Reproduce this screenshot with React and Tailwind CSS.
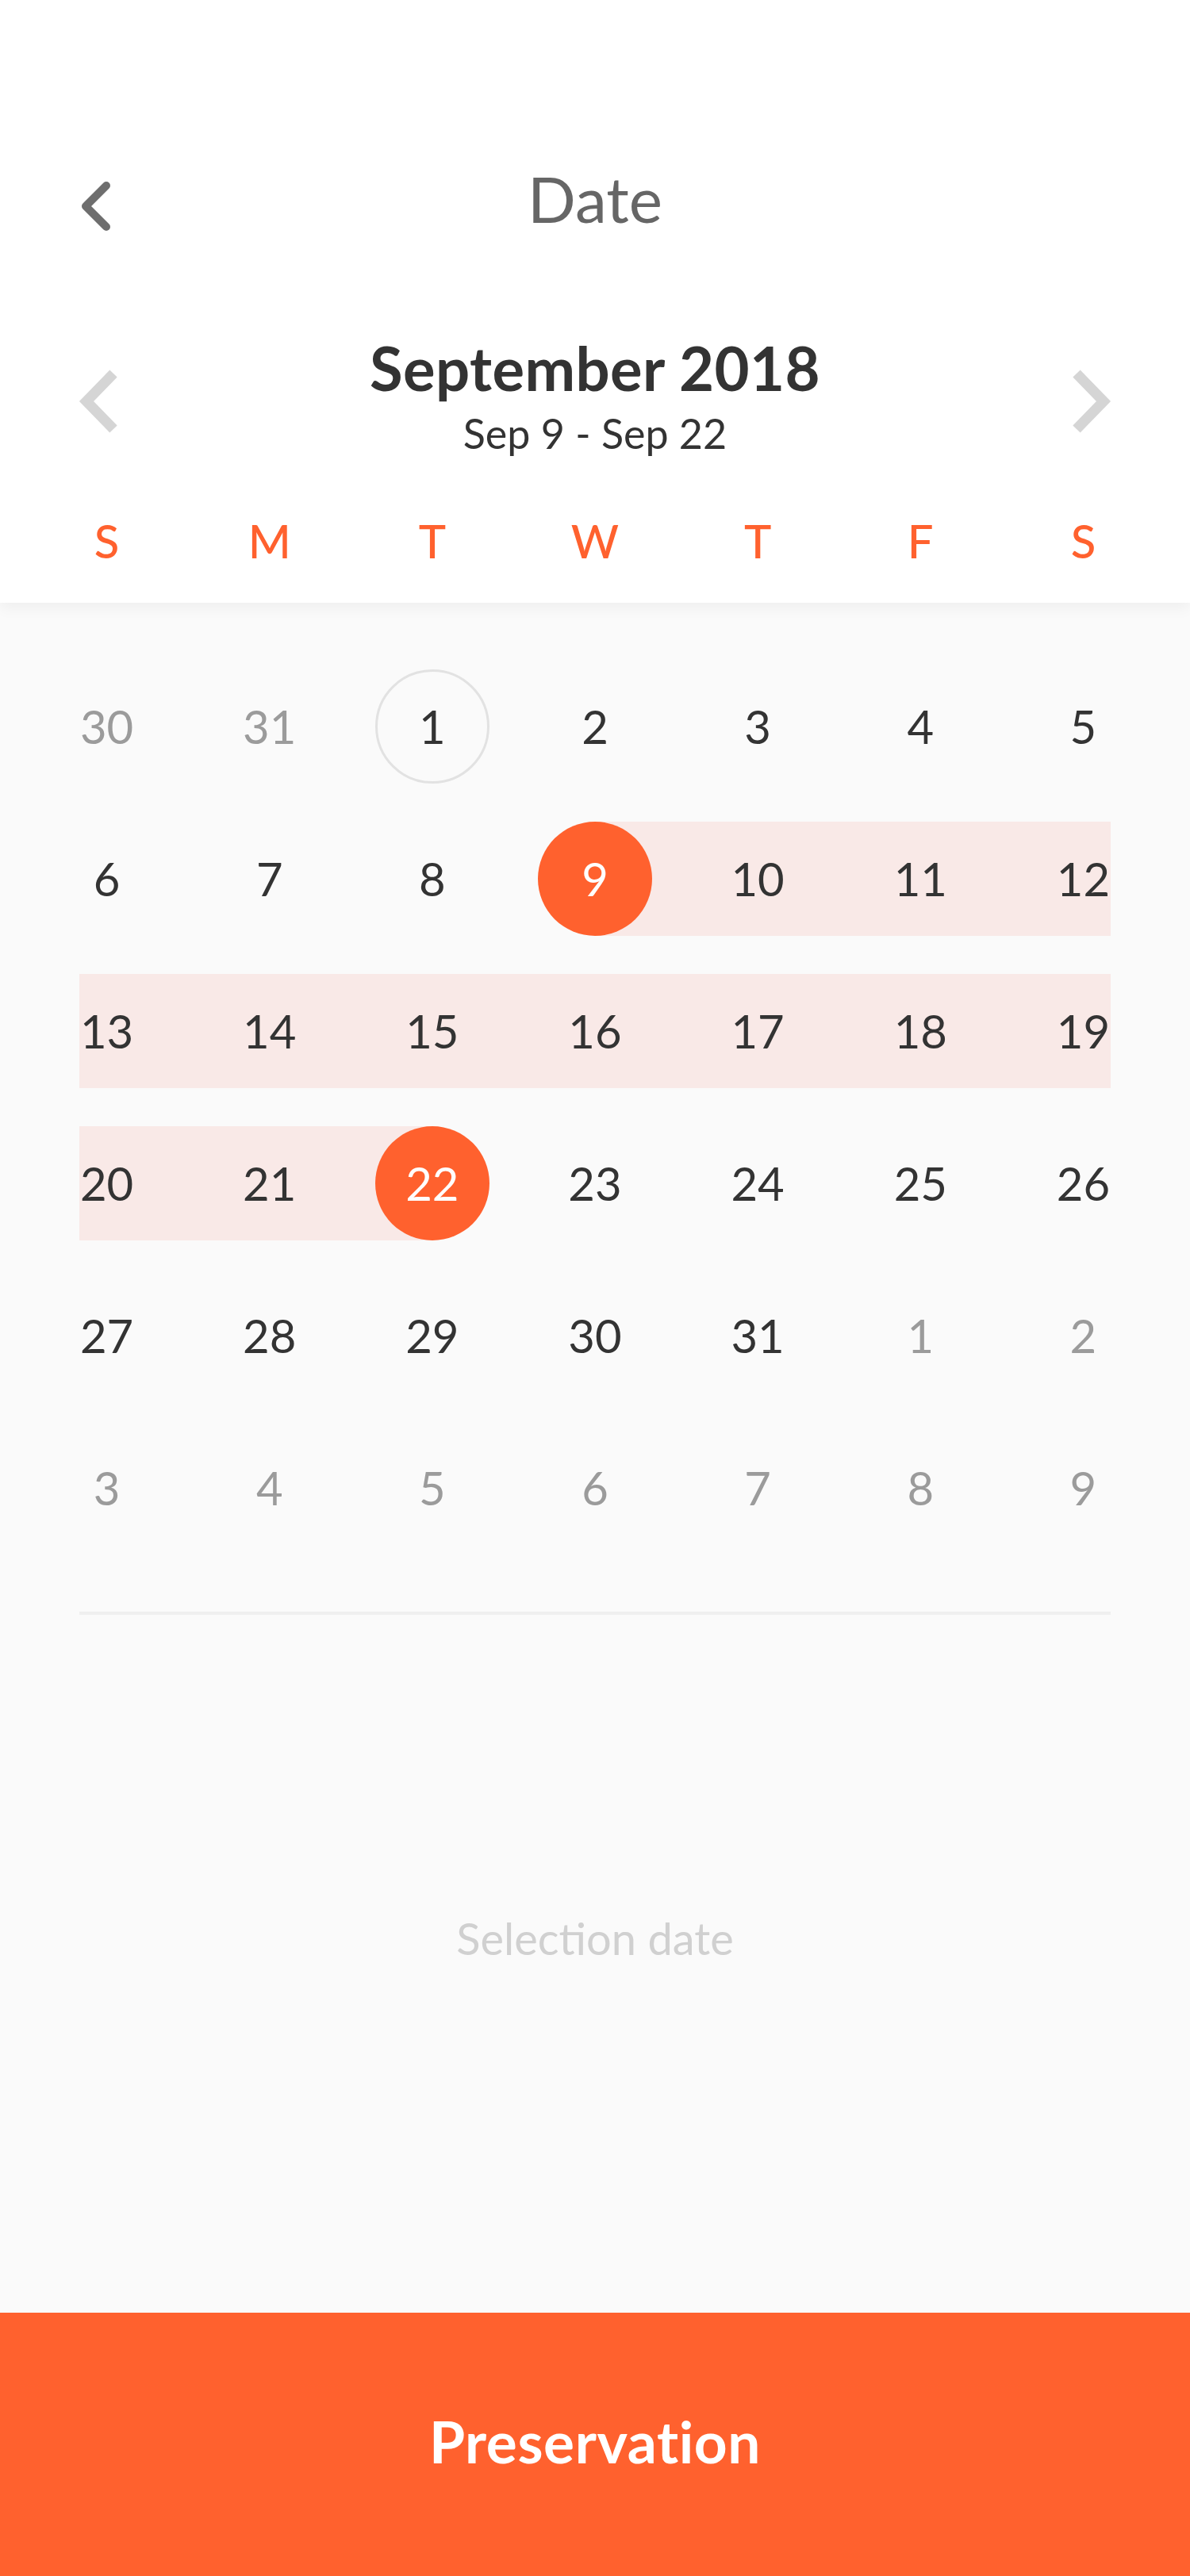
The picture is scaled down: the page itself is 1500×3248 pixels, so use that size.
import React from "react";

const weekdays = ["S", "M", "T", "W", "T", "F", "S"];

// each cell: [label, muted, band: 'none'|'full'|'left'|'right', mark: 'none'|'sel'|'ring']
const rows = [
  [["30", 1], ["31", 1], ["1", 0, "none", "ring"], ["2"], ["3"], ["4"], ["5"]],
  [["6"], ["7"], ["8"], ["9", 0, "right", "sel"], ["10", 0, "full"], ["11", 0, "full"], ["12", 0, "full"]],
  [["13", 0, "full"], ["14", 0, "full"], ["15", 0, "full"], ["16", 0, "full"], ["17", 0, "full"], ["18", 0, "full"], ["19", 0, "full"]],
  [["20", 0, "full"], ["21", 0, "full"], ["22", 0, "left", "sel"], ["23"], ["24"], ["25"], ["26"]],
  [["27"], ["28"], ["29"], ["30"], ["31"], ["1", 1], ["2", 1]],
  [["3", 1], ["4", 1], ["5", 1], ["6", 1], ["7", 1], ["8", 1], ["9", 1]],
];

function bandClass(b) {
  if (b === "full") return "bg-[#f9e9e7]";
  if (b === "right") return "bg-[linear-gradient(to_right,transparent_50%,#f9e9e7_50%)]";
  if (b === "left") return "bg-[linear-gradient(to_right,#f9e9e7_50%,transparent_50%)]";
  return "";
}

function DayCell({ cell }) {
  const [label, muted, band = "none", mark = "none"] = cell;
  let inner;
  if (mark === "sel") {
    inner = (
      <div className="w-[144px] h-[144px] rounded-full bg-[#ff612e] flex items-center justify-center text-white">
        {label}
      </div>
    );
  } else if (mark === "ring") {
    inner = (
      <div className="w-[144px] h-[144px] rounded-full border-[3px] border-[#e2e2e2] flex items-center justify-center text-[#333333]">
        {label}
      </div>
    );
  } else {
    inner = <span className={muted ? "text-[#9b9b9b]" : "text-[#333333]"}>{label}</span>;
  }
  return (
    <div className={"h-[144px] flex items-center justify-center " + bandClass(band)}>
      {inner}
    </div>
  );
}

export default function App() {
  return (
    <div
      className="w-[1500px] h-[3248px] bg-[#fafafa] flex flex-col overflow-hidden"
      style={{ fontFamily: "Lato, 'Open Sans', sans-serif" }}
    >
      {/* Header */}
      <div className="bg-white relative z-10 shadow-[0_6px_18px_rgba(0,0,0,0.05)] pt-[190px] pb-[43px]">
        {/* Title row */}
        <div className="h-[128px] grid grid-cols-[1fr_auto_1fr] items-center">
          <div className="pl-[96px] flex items-center">
            <svg width="50" height="128" viewBox="0 0 50 128" fill="none">
              <polyline
                points="38,44 12,70 38,96"
                stroke="#6e6e6e"
                strokeWidth="10"
                strokeLinecap="round"
                strokeLinejoin="round"
              />
            </svg>
          </div>
          <div className="mb-[8px] text-[80px] leading-[1.2] text-[#666666] font-normal">Date</div>
          <div />
        </div>

        {/* Month row */}
        <div className="mt-[101px] h-[158px] px-[96px] flex items-center justify-between">
          <svg width="56" height="158" viewBox="0 0 56 158" fill="none">
            <polyline points="47,52 13,87 47,122" stroke="#d5d5d5" strokeWidth="13" strokeLinejoin="miter" />
          </svg>
          <div className="flex flex-col items-center">
            <div className="text-[76px] leading-[89px] tracking-[0.4px] font-bold text-[#333333]">September 2018</div>
            <div className="mt-[7px] text-[52px] leading-[62px] text-[#333333]">Sep 9 - Sep 22</div>
          </div>
          <svg width="56" height="158" viewBox="0 0 56 158" fill="none">
            <polyline points="9,52 43,87 9,122" stroke="#d5d5d5" strokeWidth="13" strokeLinejoin="miter" />
          </svg>
        </div>

        {/* Weekdays */}
        <div className="mt-[70px] px-[32px] grid grid-cols-7 h-[70px] items-center">
          {weekdays.map((d, i) => (
            <div key={i} className="text-center text-[58px] leading-[70px] text-[#ff612e] font-medium">
              {d}
            </div>
          ))}
        </div>
      </div>

      {/* Calendar body */}
      <div className="pt-[84px] mx-[100px] overflow-hidden">
        <div className="-mx-[68px] flex flex-col gap-[48px] text-[58px] leading-none">
          {rows.map((row, ri) => (
            <div key={ri} className="grid grid-cols-7">
              {row.map((cell, ci) => (
                <DayCell key={ci} cell={cell} />
              ))}
            </div>
          ))}
        </div>
      </div>

      {/* Divider */}
      <div className="mt-[84px] mx-[100px] h-[4px] bg-[#efefef]" />

      {/* Selection date */}
      <div className="mt-[374px] text-center text-[56px] leading-[68px] text-[#d0d0d0]">Selection date</div>

      {/* Button */}
      <div className="mt-auto h-[332px] pb-[8px] bg-[#ff612e] flex items-center justify-center">
        <span className="text-white text-[73px] leading-[85px] tracking-[0.6px] font-bold">Preservation</span>
      </div>
    </div>
  );
}
